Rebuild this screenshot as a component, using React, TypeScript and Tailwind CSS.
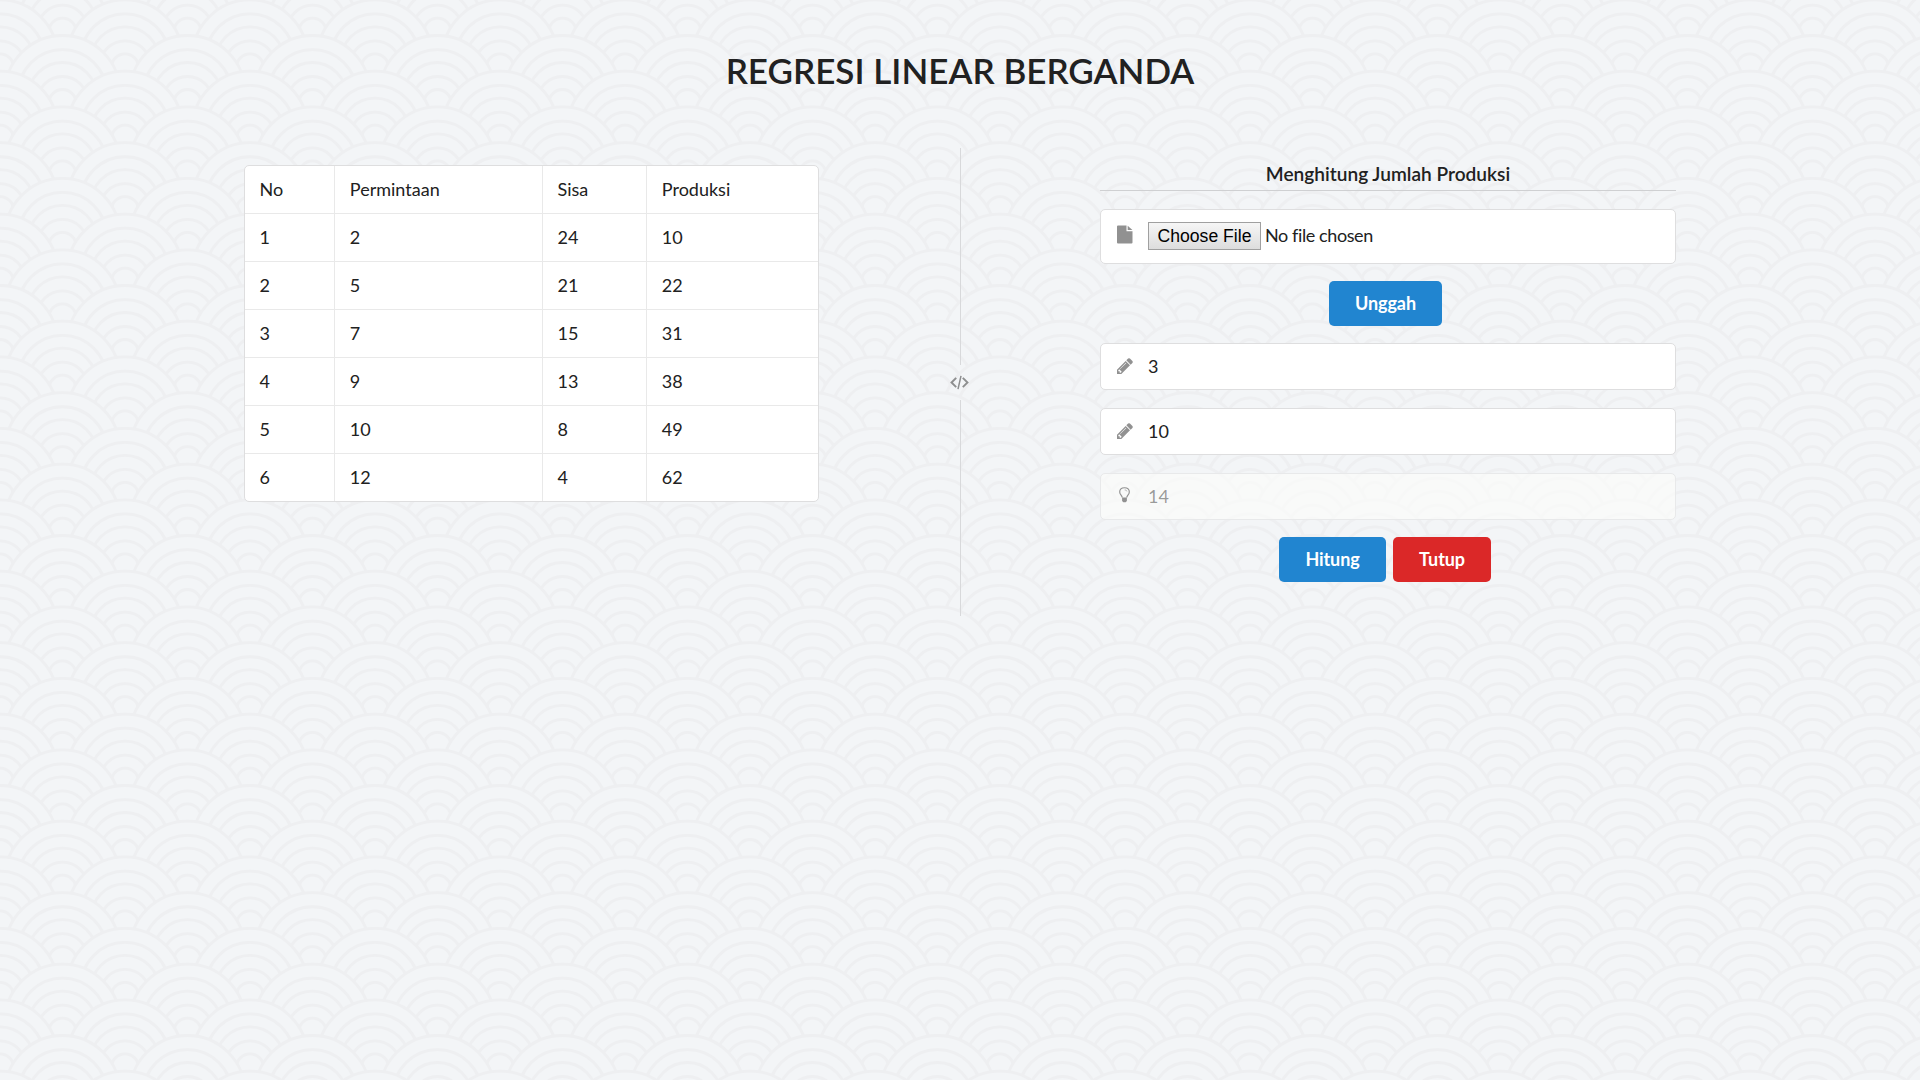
import React from "react";

const rows = [
  ["No", "Permintaan", "Sisa", "Produksi"],
  ["1", "2", "24", "10"],
  ["2", "5", "21", "22"],
  ["3", "7", "15", "31"],
  ["4", "9", "13", "38"],
  ["5", "10", "8", "49"],
  ["6", "12", "4", "62"],
];

const columns = [
  "w-[89px] pl-[14.5px]",
  "w-[209px] border-l border-[#e9e9e9] pl-[15px]",
  "w-[104px] border-l border-[#e9e9e9] pl-[14px]",
  "w-[172px] border-l border-[#e9e9e9] pl-[14.5px]",
];

// Ring radii and the distance from the top of the outer ring to each ring's centre.
const rings = [
  [57.6, 57.6],
  [44.2, 58.3],
  [34.2, 61.2],
  [25, 66],
  [13.5, 67.5],
];

function Scallop({ x, y }: { x: number; y: number }) {
  return (
    <g>
      {rings.map(([r, cy]) => (
        <circle key={r} cx={x} cy={y + cy} r={r} />
      ))}
    </g>
  );
}

function Waves() {
  const scallops: { x: number; y: number }[] = [];
  for (let i = -3; i < 15; i++) {
    const shift = Math.abs(i) % 2 === 1 ? 0 : 62.5;
    for (let j = 0; j < 6; j++) {
      scallops.push({ x: shift + (j - 1) * 125, y: 35.5 + i * 35.714 });
    }
  }
  return (
    <svg className="absolute inset-0 -z-10 h-full w-full" aria-hidden="true">
      <defs>
        <pattern id="waves" width="500" height="500" patternUnits="userSpaceOnUse">
          <g fill="#f3f5f7" stroke="#eeeff1" strokeWidth="2.8">
            {scallops.map((s, i) => (
              <Scallop key={i} x={s.x} y={s.y} />
            ))}
          </g>
        </pattern>
      </defs>
      <rect width="100%" height="100%" fill="url(#waves)" />
    </svg>
  );
}

function FileIcon() {
  return (
    <svg className="h-[19px] w-4" viewBox="0 0 16 19" fill="#919191">
      <path d="M1 .5h8.5v5.7h6v11.3a1 1 0 0 1-1 1H1a1 1 0 0 1-1-1v-16a1 1 0 0 1 1-1Z" />
      <path d="M10.700 .8 15.400 5h-4.700Z" />
    </svg>
  );
}

function PencilIcon() {
  return (
    <svg className="size-4" viewBox="0 0 1536 1536" fill="#919191">
      <path d="M363 1408l91-91-235-235-91 91v107h128v128h107zm523-928q0-22-22-22-10 0-17 7l-542 542q-7 7-7 17 0 22 22 22 10 0 17-7l542-542q7-7 7-17zm-54-192l416 416-832 832H0v-416zm683 96q0 53-37 90l-166 166-416-416 166-165q36-38 90-38 53 0 91 38l235 234q37 39 37 91z" />
    </svg>
  );
}

function BulbIcon() {
  return (
    <svg className="h-4 w-[11px]" viewBox="0 0 11 16" fill="none" stroke="#919191">
      <path d="M3.200 10.600C3.200 8.500.7 7.700.7 4.900.7 2.300 2.900.7 5.500.7s4.800 1.600 4.800 4.200c0 2.800-2.500 3.600-2.500 5.700" strokeWidth="1.150" />
      <path d="M5.700 2.900c1.200 0 2 .7 2.200 1.500" strokeWidth=".7" />
      <path d="M3.100 10.500h4.800v3.500l-1.200 1.200H4.300L3.100 14Z" fill="#919191" stroke="none" />
    </svg>
  );
}

function CodeIcon() {
  return (
    <svg className="mr-px h-[15px] w-[19px]" viewBox="0 0 19 15" fill="none" stroke="#8d8e8f">
      <path d="M6.200 2.800 1.500 7.500l4.700 4.700M12.800 2.800l4.700 4.700-4.700 4.700" strokeWidth="1.900" />
      <path d="M11 .8 8 14.200" strokeWidth="1.500" />
    </svg>
  );
}

function Field({
  icon,
  value,
  disabled = false,
}: {
  icon: React.ReactNode;
  value: string;
  disabled?: boolean;
}) {
  return (
    <div
      className={
        disabled
          ? "flex h-[47px] items-center rounded-[5px] border border-[#e8e9ea] bg-[#fcfcfb]/65 text-[#222]/45"
          : "flex h-[47px] items-center rounded-[5px] border border-[#dededf] bg-white"
      }
    >
      <span className={"flex w-[47px] items-center justify-center " + (disabled ? "pb-[4px]" : "pb-[2px]")}>
        {icon}
      </span>
      <span>{value}</span>
    </div>
  );
}

function Button({ label, className }: { label: string; className: string }) {
  return (
    <button className={"h-[45px] rounded-[5px] text-center font-bold tracking-[-0.1px] text-white " + className}>
      {label}
    </button>
  );
}

export default function App() {
  return (
    <div className="relative isolate h-[1080px] w-full overflow-hidden bg-[#f3f5f7] font-['Lato',sans-serif] text-[18px] leading-[23px] text-[#212121]">
      <Waves />
      <h1 className="pt-[47px] text-center text-[35px] leading-[46px] font-semibold">
        REGRESI LINEAR BERGANDA
      </h1>
      <div className="mt-[55px] flex">
        <div className="ml-[244px] w-[575px] pt-[17px]">
          <div className="overflow-hidden rounded-[5px] border border-[#dededf] bg-white">
            {rows.map((row, i) => (
              <div key={i} className={i ? "flex h-12 border-t border-[#e9e9e9]" : "flex h-[47px]"}>
                {row.map((cell, j) => (
                  <div key={j} className={"flex items-center " + columns[j]}>
                    {cell}
                  </div>
                ))}
              </div>
            ))}
          </div>
        </div>
        <div className="ml-[131px] flex h-[468px] w-5 flex-col items-center">
          <div className="w-px flex-1 bg-[#d8d9db]" />
          <div className="flex h-[35px] items-center">
            <CodeIcon />
          </div>
          <div className="w-px flex-1 bg-[#d8d9db]" />
        </div>
        <div className="ml-[130px] w-[576px] pt-[14px]">
          <h2 className="h-[29px] border-b border-[#cfd0d2] text-center text-[19.1px] leading-[23px] font-semibold">
            Menghitung Jumlah Produksi
          </h2>
          <div className="mt-[18px] flex h-[55px] items-center rounded-[5px] border border-[#dededf] bg-white">
            <span className="flex w-[47px] items-center justify-center pb-[5px]">
              <FileIcon />
            </span>
            <span className="mb-px flex h-[28px] w-[113px] items-center justify-center border border-[#a0a0a0] bg-linear-to-b from-[#f6f6f6] to-[#dddddd] font-['Liberation_Sans',sans-serif] text-[17.6px] text-black">
              Choose File
            </span>
            <span className="mb-[2px] ml-[4px] tracking-[-0.4px]">No file chosen</span>
          </div>
          <div className="mt-[17px] flex justify-center pr-[5px]">
            <Button label="Unggah" className="w-[113px] bg-[#2185d0]" />
          </div>
          <div className="mt-[17px] flex flex-col gap-[18px]">
            <Field icon={<PencilIcon />} value="3" />
            <Field icon={<PencilIcon />} value="10" />
            <Field icon={<BulbIcon />} value="14" disabled />
          </div>
          <div className="mt-[17px] flex justify-center gap-[7px] pr-[6px]">
            <Button label="Hitung" className="w-[107px] bg-[#2185d0]" />
            <Button label="Tutup" className="w-[98px] bg-[#db2828]" />
          </div>
        </div>
      </div>
    </div>
  );
}
